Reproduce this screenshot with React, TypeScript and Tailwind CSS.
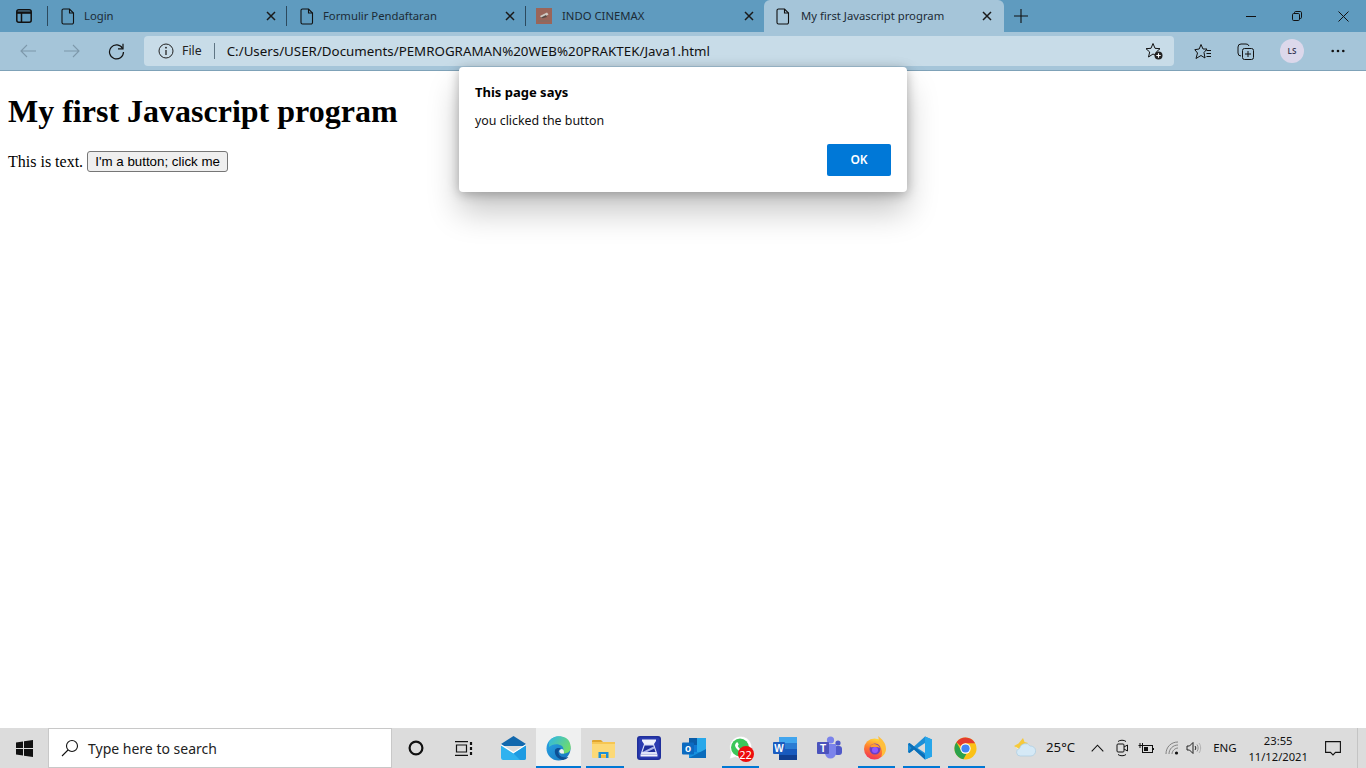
import React from "react";

const DocIcon = () => (
  <svg width="14" height="17" viewBox="0 0 14 17" fill="none" stroke="#111" strokeWidth="1.1">
    <path d="M2.5 1H8.5L12.5 5V14.5a1.5 1.5 0 0 1-1.5 1.5H2.5A1.5 1.5 0 0 1 1 14.5V2.5A1.5 1.5 0 0 1 2.5 1Z" />
    <path d="M8.5 1V5H12.5" />
  </svg>
);

const X = () => (
  <svg width="10" height="10" viewBox="0 0 10 10" stroke="#1a1a1a" strokeWidth="1.5" fill="none">
    <path d="M1 1L9 9M9 1L1 9" />
  </svg>
);

const Sep = () => <div className="w-px h-5 bg-[#2c4a5e] shrink-0" />;

function Tab({ icon, title }: { icon: React.ReactNode; title: string }) {
  return (
    <div className="w-[238px] h-full flex items-center pl-[11px] pr-[10px] shrink-0">
      <div className="w-[16px] ml-[1px] flex justify-center shrink-0">{icon}</div>
      <span className="ml-[8px] flex-1 text-[11.3px] text-[#1c2b36] whitespace-nowrap">{title}</span>
      <X />
    </div>
  );
}

const Favicon = () => (
  <svg width="16" height="16" viewBox="0 0 16 16">
    <rect width="16" height="16" fill="#9a6559" />
    <rect x="2" y="12" width="12" height="2" fill="#8a6a60" />
    <path d="M4 8L11 4.5L12.5 6.5L6 10.5Z" fill="#cfcbc4" />
    <path d="M5 9.5L10 7L11 9L6 10.5Z" fill="#5a4a44" />
  </svg>
);

function ToolIcon({ children, className }: { children: React.ReactNode; className: string }) {
  return <div className={`flex items-center justify-center shrink-0 ${className}`}>{children}</div>;
}

function TaskApp({ children, open, active }: { children: React.ReactNode; open?: boolean; active?: boolean }) {
  return (
    <div className={`relative w-[45.2px] h-full flex items-center justify-center shrink-0 ${active ? "bg-[#eff0f0]" : ""}`}>
      {children}
      {open && (
        <div className={`absolute bottom-0 h-[2px] bg-[#0078d4] ${active ? "left-0 right-0" : "left-[5px] right-[3px]"}`} />
      )}
    </div>
  );
}

const Mail = () => (
  <svg width="25" height="24" viewBox="0 0 25 24">
    <path d="M12.5 0L25 8V10H0V8Z" fill="#1268ad" />
    <path d="M0 8L12.5 16L25 8V22a2 2 0 0 1-2 2H2a2 2 0 0 1-2-2Z" fill="#fff" />
    <path d="M0 9.5L12.5 17.5L25 9.5V22a2 2 0 0 1-2 2H2a2 2 0 0 1-2-2Z" fill="#2fb2ef" />
    <path d="M12.5 17.5L25 9.5V22a2 2 0 0 1-2 2H19Z" fill="#1e9be2" />
  </svg>
);

const Edge = () => (
  <svg width="25" height="25" viewBox="0 0 25 25">
    <defs>
      <linearGradient id="eg1" x1="0" y1="0" x2="1" y2="1">
        <stop offset="0" stopColor="#2aa6e6" />
        <stop offset="1" stopColor="#1574bd" />
      </linearGradient>
      <linearGradient id="eg2" x1="0" y1="0" x2="1" y2="0.6">
        <stop offset="0" stopColor="#2fb6e8" />
        <stop offset="1" stopColor="#6fdc6a" />
      </linearGradient>
    </defs>
    <circle cx="12.5" cy="12.5" r="12" fill="url(#eg1)" />
    <path d="M3 6C6 0 14-1 20 2C24 4.5 25 9 24.5 13C24 16 21 17.5 17 17.5H15C18 15 18 12 16 10C12 7 6 8 3 11Z" fill="url(#eg2)" />
    <path d="M9 14C8 18 11 23 17 24C19.5 23.5 21 22.5 22.5 21C17 22.5 13 20 12.5 17C12.2 15 13 13.5 15 12.5C12.5 11.5 10 12 9 14Z" fill="#0d4f94" />
    <path d="M13.3 15.3C13.6 13.8 15 12.7 16.5 13.2C17.6 13.6 18 15 18 17.5H15C14 17.2 13.2 16.3 13.3 15.3Z" fill="#eff0f0" />
  </svg>
);

const Explorer = () => (
  <svg width="23" height="19" viewBox="0 0 23 19">
    <path d="M0 2a1 1 0 0 1 1-1H9L11 3H0Z" fill="#e0a52e" />
    <rect y="3" width="23" height="16" rx="1" fill="#fcd977" />
    <rect y="3" width="23" height="2" fill="#f6c653" />
    <path d="M6.5 13H16.5V19H14V15H9V19H6.5Z" fill="#1c8fd8" />
    <rect x="9" y="16" width="5" height="3" fill="#f2b93f" />
  </svg>
);

const Scanner = () => (
  <svg width="24" height="24" viewBox="0 0 24 24">
    <rect width="24" height="24" rx="3" fill="#1f2f9b" />
    <rect x="1.5" y="1.5" width="21" height="21" rx="2" fill="#2a3bb0" />
    <path d="M5 3.5H19V5L17 8H7L5 5Z" fill="#eef1fb" />
    <path d="M7 8H17L20.5 18.5H3.5Z" fill="#dfe4f8" />
    <path d="M7.7 9.5H16.3L18.5 16H5.5Z" fill="#1f2f9b" />
    <path d="M5.5 16L16.6 10.5L17.4 12.5L10 16Z" fill="#aab4ea" />
    <path d="M3.5 18.5H20.5V20.5H3.5Z" fill="#f4f6fd" />
  </svg>
);

const Outlook = () => (
  <svg width="25" height="23" viewBox="0 0 25 23">
    <rect x="7" y="1" width="17" height="20" fill="#1490df" />
    <rect x="7" y="1" width="8" height="7" fill="#0a5ca8" />
    <rect x="15" y="1" width="9" height="7" fill="#28a8ea" />
    <rect x="7" y="8" width="8" height="7" fill="#0f78d4" />
    <rect x="15" y="8" width="9" height="7" fill="#28a8ea" />
    <path d="M7 21L24 12V21Z" fill="#0a6cbc" />
    <rect x="0" y="5.5" width="12" height="12" rx="1" fill="#0b6ac0" />
    <text x="6" y="15" fontSize="10" fontWeight="700" fill="#fff" textAnchor="middle" fontFamily="'Liberation Sans', sans-serif">o</text>
  </svg>
);

const WhatsApp = () => (
  <div className="relative w-[24px] h-[24px]">
    <svg width="24" height="24" viewBox="0 0 24 24">
      <path d="M1.5 23L3 16.5A11 11 0 1 1 7.5 21Z" fill="#fff" stroke="#d8d8d8" strokeWidth=".6" />
      <circle cx="12" cy="11.5" r="9" fill="#3cc65a" />
      <path d="M8 7C9 6 9.7 6.2 10 7L10.7 8.6L9.8 10C10.6 11.6 12 13 13.8 13.8L15 12.7L16.8 13.6C17 15 15.8 16.3 14 16C10.5 15.3 7 11.8 7 9Z" fill="#fff" />
    </svg>
    <div className="absolute left-[10px] top-[10px] w-[16px] h-[16px] rounded-full bg-[#ee0c0c] flex items-center justify-center text-[11px] leading-none text-white font-['Noto_Sans',sans-serif]">22</div>
  </div>
);

const Word = () => (
  <svg width="24" height="23" viewBox="0 0 24 23">
    <rect x="6" y="0" width="18" height="6" fill="#41a5ee" />
    <rect x="6" y="6" width="18" height="6" fill="#2b7cd3" />
    <rect x="6" y="12" width="18" height="6" fill="#185abd" />
    <rect x="6" y="18" width="18" height="5" fill="#103f91" />
    <rect x="0" y="5" width="12" height="12" rx="1" fill="#1a5cc0" />
    <text x="6" y="14.5" fontSize="10" fontWeight="700" fill="#fff" textAnchor="middle" fontFamily="'Liberation Sans', sans-serif">W</text>
  </svg>
);

const Teams = () => (
  <svg width="25" height="24" viewBox="0 0 25 24">
    <circle cx="21" cy="7" r="2.6" fill="#5059c9" />
    <rect x="17" y="10" width="8" height="9" rx="3" fill="#5059c9" />
    <circle cx="13.5" cy="4" r="3.6" fill="#7b83eb" />
    <path d="M8 8H19V17A5.5 5.5 0 0 1 8 17Z" fill="#7b83eb" />
    <rect x="0" y="6" width="12" height="12" rx="1" fill="#4b53bc" />
    <text x="6" y="15.5" fontSize="10" fontWeight="700" fill="#fff" textAnchor="middle" fontFamily="'Liberation Sans', sans-serif">T</text>
  </svg>
);

const Firefox = () => (
  <svg width="24" height="24" viewBox="0 0 24 24">
    <defs>
      <linearGradient id="ff1" x1="0.6" y1="0" x2="0.3" y2="1">
        <stop offset="0" stopColor="#ffd93b" />
        <stop offset=".5" stopColor="#ff7a2e" />
        <stop offset="1" stopColor="#f0305a" />
      </linearGradient>
    </defs>
    <circle cx="11.5" cy="13" r="10.5" fill="url(#ff1)" />
    <path d="M15 0C19 3 23 7 23 13C23 16 21 20 18 21C20 17 19 11 15 7C16 5 16 3 15 0Z" fill="#ffbf3c" />
    <circle cx="12" cy="13" r="5.5" fill="#6c3fc2" />
    <path d="M7 11C10 12 13 10 17 12C16 9 13 8 11 8C9 8 8 9 7 11Z" fill="#ff9d2e" />
    <circle cx="12" cy="14" r="3" fill="#9059ff" />
  </svg>
);

const VSCode = () => (
  <svg width="24" height="24" viewBox="0 0 24 24">
    <path d="M17 0.5L24 3.5V20.5L17 23.5L6 13.5L1.5 17L0 16V8L1.5 7L6 10.5Z" fill="#1e8fd6" />
    <path d="M17 0.5L24 3.5V20.5L17 23.5Z" fill="#27a6ea" />
    <path d="M17 7L9.5 12L17 17Z" fill="#dcdcdc" />
    <path d="M0 8L1.5 7L17 19V23.5L6 13.5L1.5 17L0 16L3.5 12Z" fill="#0b6fb8" />
  </svg>
);

const Chrome = () => (
  <svg width="23" height="23" viewBox="0 0 24 24">
    <circle cx="12" cy="12" r="11.5" fill="#fbc116" />
    <path d="M12 .5A11.5 11.5 0 0 1 22 6.5H12A5.5 5.5 0 0 0 7 9.5L2.5 5.5A11.5 11.5 0 0 1 12 .5Z" fill="#e33b2e" />
    <path d="M2.5 5.5L7.5 14A5.5 5.5 0 0 0 13 17.5L9.8 23.3A11.5 11.5 0 0 1 2.5 5.5Z" fill="#2ba24c" />
    <circle cx="12" cy="12" r="5.4" fill="#fff" />
    <circle cx="12" cy="12" r="4.3" fill="#4285f4" />
  </svg>
);

const Weather = () => (
  <svg width="22" height="20" viewBox="0 0 22 20">
    <path d="M9 0L10.5 4L14 5L9 10L5 11L0 8L4.5 5.5Z" fill="#f6c93a" />
    <path d="M1.5 8.5L5 11L4 12Z" fill="#fdf3c9" />
    <path d="M6.5 18A3.8 3.8 0 0 1 5.5 10.5A6 6 0 0 1 16.2 8A5 5 0 0 1 17 18Z" fill="#d5e9f6" stroke="#a9cde2" strokeWidth=".7" />
  </svg>
);

export default function App() {
  return (
    <div className="relative w-[1366px] h-[768px] overflow-hidden bg-white flex flex-col font-['Noto_Sans',sans-serif]">
      {/* Tab strip */}
      <div className="h-[32px] shrink-0 bg-[#5f9bbf] flex items-center relative">
        <div className="w-[47px] flex justify-center shrink-0 pl-[1px]">
          <svg width="16" height="14" viewBox="0 0 16 14" fill="none" stroke="#111" strokeWidth="1.5">
            <rect x=".8" y=".8" width="14.4" height="12.4" rx="2" />
            <path d="M.8 3.6H15.2" strokeWidth="2.4" />
            <path d="M5.5 3.6V13" />
          </svg>
        </div>
        <Sep />
        <Tab icon={<DocIcon />} title="Login" />
        <Sep />
        <Tab icon={<DocIcon />} title="Formulir Pendaftaran" />
        <Sep />
        <div className="w-[238px] h-full flex items-center pl-[10px] pr-[10px] shrink-0">
          <Favicon />
          <span className="ml-[10px] flex-1 text-[11.3px] text-[#1c2b36] whitespace-nowrap">INDO CINEMAX</span>
          <X />
        </div>
        <div className="w-[240px] h-[36px] self-start flex items-center bg-[#a5c5d9] rounded-t-[6px] pl-[13px] pr-[12px] shrink-0 pb-[4px]">
          <div className="w-[14px] flex justify-center ml-[-1px]"><DocIcon /></div>
          <span className="ml-[11px] flex-1 text-[11.3px] text-[#1c2b36] whitespace-nowrap">My first Javascript program</span>
          <X />
        </div>
        <div className="ml-[9px] shrink-0">
          <svg width="16" height="16" viewBox="0 0 16 16" stroke="#111" strokeWidth="1.1"><path d="M8 1V15M1 8H15" /></svg>
        </div>
        <div className="ml-auto flex items-center h-full">
          <div className="w-[46px] flex justify-center">
            <svg width="10" height="10" viewBox="0 0 10 10" stroke="#111"><path d="M0 5.5H10" /></svg>
          </div>
          <div className="w-[46px] flex justify-center">
            <svg width="10" height="10" viewBox="0 0 10 10" fill="none" stroke="#111"><rect x=".5" y="2.5" width="7" height="7" rx="1.2" /><path d="M2.5 2.5V1.7A1.2 1.2 0 0 1 3.7.5H8.3A1.2 1.2 0 0 1 9.5 1.7V6.3A1.2 1.2 0 0 1 8.3 7.5H7.5" /></svg>
          </div>
          <div className="w-[46px] flex justify-center">
            <svg width="11" height="11" viewBox="0 0 11 11" stroke="#111"><path d="M.5.5L10.5 10.5M10.5.5L.5 10.5" /></svg>
          </div>
        </div>
      </div>

      {/* Toolbar */}
      <div className="h-[39px] shrink-0 bg-[#a5c5d9] border-b border-[#7fa2b8] flex items-start pt-[4px]">
        <ToolIcon className="w-[16px] h-[30px] ml-[20px]">
          <svg width="16" height="14" viewBox="0 0 16 14" fill="none" stroke="#7d98aa" strokeWidth="1.1"><path d="M16 7H1M7 1L1 7L7 13" /></svg>
        </ToolIcon>
        <ToolIcon className="w-[16px] h-[30px] ml-[28px]">
          <svg width="16" height="14" viewBox="0 0 16 14" fill="none" stroke="#7d98aa" strokeWidth="1.1"><path d="M0 7H15M9 1L15 7L9 13" /></svg>
        </ToolIcon>
        <ToolIcon className="w-[18px] h-[30px] ml-[27px]">
          <svg width="17" height="17" viewBox="0 0 17 17" fill="none" stroke="#111" strokeWidth="1.2"><path d="M14.6 5.5A7 7 0 1 0 15.5 9" /><path d="M15 .8V5.8H10" /></svg>
        </ToolIcon>
        <div className="w-[1030px] h-[30px] ml-[19px] bg-[#c8dce8] rounded-[4px] flex items-center shrink-0 pl-[14px] pr-[11px]">
          <svg width="16" height="16" viewBox="0 0 16 16" fill="none" stroke="#222" strokeWidth="1"><circle cx="8" cy="8" r="7" /><path d="M8 7V12" strokeWidth="1.3" /><circle cx="8" cy="4.7" r=".9" fill="#222" stroke="none" /></svg>
          <span className="ml-[8px] text-[12.3px] leading-[16px] text-[#222]">File</span>
          <div className="w-px h-[16px] bg-[#5f7584] ml-[12px]" />
          <span className="ml-[12px] flex-1 text-[13.33px] leading-[16px] text-[#111] whitespace-nowrap">C:/Users/USER/Documents/PEMROGRAMAN%20WEB%20PRAKTEK/Java1.html</span>
          <svg width="18" height="18" viewBox="0 0 18 18" fill="none" stroke="#111" strokeWidth="1">
            <path d="M8 1.5L10 6.3L15 6.7L11.3 10L12 14L8 12L3.5 15L4.7 10L1 6.7L6 6.3Z" />
            <circle cx="13.5" cy="13.5" r="4" fill="#222" stroke="none" />
            <path d="M13.5 11.3V15.7M11.3 13.5H15.7" stroke="#fff" strokeWidth="1.1" />
          </svg>
        </div>
        <ToolIcon className="w-[18px] h-[30px] ml-[20px]">
          <svg width="18" height="17" viewBox="0 0 18 17" fill="none" stroke="#111" strokeWidth="1"><path d="M7 1.5L9 6H13L10 9.5L11 15L7 12.5L2 15.5L3.5 10L.8 6.7L5.2 6Z" /><path d="M12.5 7.5H17M12.5 10.5H17M12.5 13.5H17" /></svg>
        </ToolIcon>
        <ToolIcon className="w-[18px] h-[30px] ml-[24px]">
          <svg width="17" height="17" viewBox="0 0 17 17" fill="none" stroke="#111" strokeWidth="1"><path d="M4 13A3 3 0 0 1 1 10V4A3 3 0 0 1 4 1H9A3 3 0 0 1 12 3" /><rect x="5.5" y="5.5" width="11" height="11" rx="2" /><path d="M11 8V14M8 11H14" /></svg>
        </ToolIcon>
        <div className="w-[24px] h-[24px] ml-[26px] mt-[3px] rounded-full bg-[#dcd8eb] flex items-center justify-center text-[8px] font-semibold text-[#3a3a55] shrink-0">LS</div>
        <ToolIcon className="w-[16px] h-[30px] ml-[26px]">
          <svg width="14" height="4" viewBox="0 0 14 4" fill="#111"><circle cx="1.7" cy="2" r="1.3" /><circle cx="7" cy="2" r="1.3" /><circle cx="12.3" cy="2" r="1.3" /></svg>
        </ToolIcon>
      </div>

      {/* Page */}
      <main className="flex-1 min-h-0 font-['Liberation_Serif',serif] text-black pl-[8px] pt-[22px]">
        <h1 className="text-[32px] leading-[37px] font-bold">My first Javascript program</h1>
        <div className="mt-[21px] flex items-center text-[16px] leading-[21px] h-[21px]">
          <span>This is text.</span>
          <button className="ml-[4px] w-[141px] h-[21px] border border-[#767676] rounded-[3px] bg-[#efefef] text-[13.33px] leading-[15px] font-['Liberation_Sans',sans-serif] text-black">I'm a button; click me</button>
        </div>
      </main>

      {/* Taskbar */}
      <div className="h-[40px] shrink-0 bg-[#dcdcdc] flex items-center">
        <div className="w-[48px] flex justify-center shrink-0">
          <svg width="17" height="17" viewBox="0 0 17 17" fill="#111"><path d="M0 2.4L7 1.4V8H0ZM8 1.3L17 0V8H8ZM0 9H7V15.6L0 14.6ZM8 9H17V17L8 15.7Z" /></svg>
        </div>
        <div className="w-[344px] h-full bg-white border border-[#c8c8c8] flex items-center shrink-0 pl-[12px]">
          <svg width="18" height="18" viewBox="0 0 18 18" fill="none" stroke="#111" strokeWidth="1.1"><circle cx="11" cy="7" r="5.5" /><path d="M7 11L1 17" /></svg>
          <span className="ml-[9px] text-[14px] leading-[20px] pt-[1px] text-[#222] whitespace-nowrap">Type here to search</span>
        </div>
        <div className="w-[48px] flex justify-center shrink-0">
          <svg width="16" height="16" viewBox="0 0 16 16" fill="none" stroke="#111" strokeWidth="2.2"><circle cx="8" cy="8" r="6.4" /></svg>
        </div>
        <div className="w-[47px] flex justify-center shrink-0">
          <svg width="18" height="15" viewBox="0 0 18 15" fill="none" stroke="#111" strokeWidth="1.2"><path d="M0 .6H13M0 14.4H13M1.5 4H11.5V11H1.5Z" /><path d="M16 1V4M16 6V9M16 11V14" strokeWidth="2.2" /></svg>
        </div>
        <div className="ml-[4px] flex h-full shrink-0">
          <TaskApp><Mail /></TaskApp>
          <TaskApp open active><Edge /></TaskApp>
          <TaskApp open><Explorer /></TaskApp>
          <TaskApp><Scanner /></TaskApp>
          <TaskApp><Outlook /></TaskApp>
          <TaskApp open><WhatsApp /></TaskApp>
          <TaskApp><Word /></TaskApp>
          <TaskApp><Teams /></TaskApp>
          <TaskApp open><Firefox /></TaskApp>
          <TaskApp open><VSCode /></TaskApp>
          <TaskApp open><Chrome /></TaskApp>
        </div>
        <div className="ml-[26px] shrink-0"><Weather /></div>
        <span className="ml-[10px] text-[13.2px] text-[#111] whitespace-nowrap shrink-0">25°C</span>
        <div className="ml-[16px] shrink-0">
          <svg width="13" height="8" viewBox="0 0 13 8" fill="none" stroke="#111" strokeWidth="1.1"><path d="M.7 7.3L6.5 1.2L12.3 7.3" /></svg>
        </div>
        <div className="ml-[12px] shrink-0">
          <svg width="12" height="18" viewBox="0 0 12 18" fill="none" stroke="#111" strokeWidth="1"><path d="M2 2.5C4 .8 8 .8 10 2.5M2 15.5C4 17.2 8 17.2 10 15.5" /><rect x="1" y="5" width="7" height="8" rx="1" /><path d="M8 8L11.5 6V12L8 10" /></svg>
        </div>
        <div className="ml-[10px] shrink-0">
          <svg width="16" height="13" viewBox="0 0 16 13" fill="none" stroke="#111"><rect x="4.5" y="3.5" width="10" height="7" /><rect x="6" y="5" width="4" height="4" fill="#111" stroke="none" /><path d="M15.5 6V8M2 1V6M4.5 1V6M.5 3.5H4.5" /></svg>
        </div>
        <div className="ml-[11px] shrink-0">
          <svg width="14" height="14" viewBox="0 0 14 14" fill="none" stroke="#777" strokeWidth=".9"><path d="M1 13C1 6 6 1 13 1M4 13C4 8 8 4 13 4M7 13C7 10 10 7 13 7" /><circle cx="11.5" cy="12" r="1.6" fill="#111" stroke="none" /></svg>
        </div>
        <div className="ml-[7px] shrink-0">
          <svg width="16" height="14" viewBox="0 0 16 14" fill="none" stroke="#111" strokeWidth=".9"><path d="M1 5H3.5L7 1.5V12.5L3.5 9H1Z" /><path d="M9 5C10 6 10 8 9 9" /><path d="M11 3.5C12.5 5.5 12.5 8.5 11 10.5" stroke="#888" /><path d="M13 2C15.2 5 15.2 9 13 12" stroke="#aaa" /></svg>
        </div>
        <span className="ml-[11px] text-[11.5px] text-[#111] shrink-0">ENG</span>
        <div className="ml-[6px] w-[71px] flex flex-col items-center text-[11.2px] leading-[16px] text-[#111] shrink-0 pt-[1px]">
          <span>23:55</span>
          <span className="whitespace-nowrap">11/12/2021</span>
        </div>
        <div className="ml-[1px] w-[36px] flex justify-center shrink-0">
          <svg width="16" height="15" viewBox="0 0 16 15" fill="none" stroke="#111" strokeWidth="1.1"><path d="M.6.6H15.4V11.4H10.5L8 14L5.5 11.4H.6Z" /></svg>
        </div>
        <div className="ml-[6px] w-px h-full bg-[#c4c4c4] shrink-0" />
      </div>

      {/* Alert overlay */}
      <div className="absolute left-[459px] top-[67px] w-[448px] h-[125px] bg-white rounded-[4px] shadow-[0_20px_32px_rgba(0,0,0,0.22),0_2px_12px_rgba(0,0,0,0.28)] px-[16px] pt-[16px] flex flex-col">
        <div className="text-[13px] leading-[18px] font-bold text-black">This page says</div>
        <div className="mt-[11px] text-[12.4px] leading-[18px] text-[#111]">you clicked the button</div>
        <div className="mt-[14px] flex justify-end">
          <button className="w-[64px] h-[32px] rounded-[2px] bg-[#0078d7] text-white text-[12px] font-semibold">OK</button>
        </div>
      </div>
    </div>
  );
}
